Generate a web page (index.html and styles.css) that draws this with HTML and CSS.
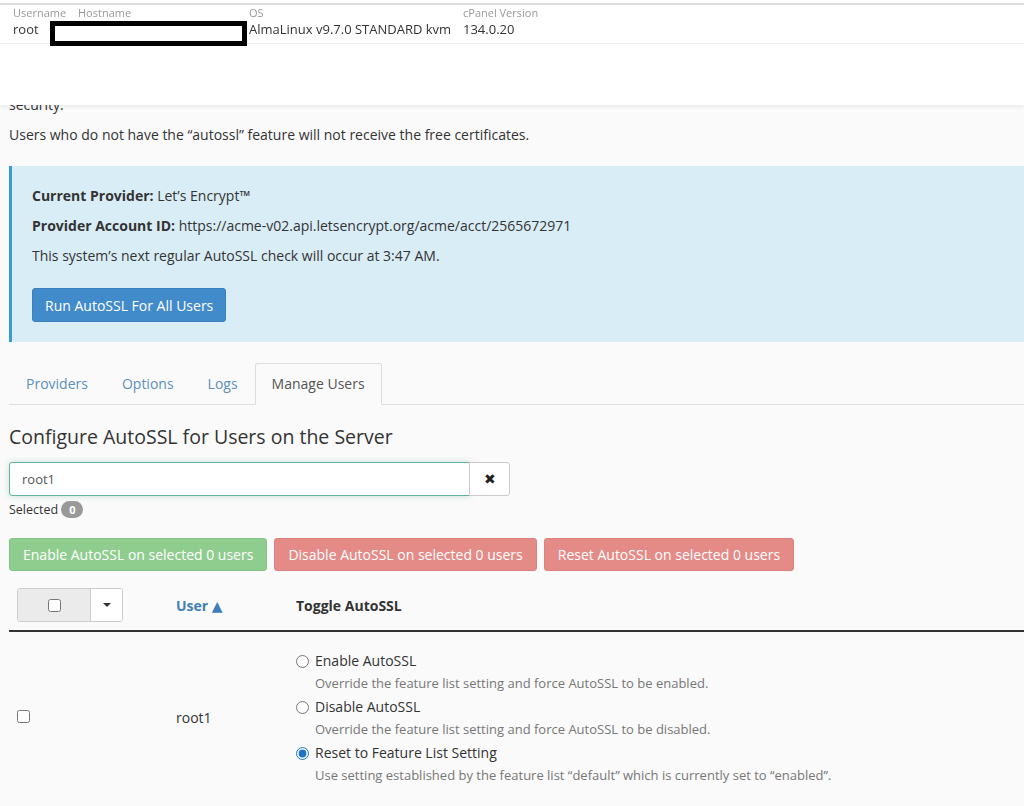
FILE: index.html
```html
<!DOCTYPE html>
<html lang="en-us">

<head>
  <meta http-equiv="Content-Type" content="text/html; charset=UTF-8">
  <title>Manage AutoSSL</title>
  <link rel="stylesheet" href="styles.css">
</head>

<body>
  <div class="header">
    <div class="topbar">
      <div class="info col-user">
        <span class="info-label">Username</span>
        <span class="info-value">root</span>
      </div>
      <div class="info col-host">
        <span class="info-label">Hostname</span>
        <span class="info-value">&nbsp;</span>
      </div>
      <div class="info col-os">
        <span class="info-label">OS</span>
        <span class="info-value">AlmaLinux v9.7.0 STANDARD kvm</span>
      </div>
      <div class="info col-ver">
        <span class="info-label">cPanel Version</span>
        <span class="info-value">134.0.20</span>
      </div>
    </div>
    <!-- hostname blacked out -->
    <div class="redact"></div>
  </div>

  <div class="main">
    <p class="intro">security.</p>
    <p class="note">Users who do not have the “autossl” feature will not receive the free certificates.</p>

    <div class="alert-info">
      <p><b>Current Provider:</b> Let’s Encrypt™</p>
      <p><b>Provider Account ID:</b> https://acme-v02.api.letsencrypt.org/acme/acct/2565672971</p>
      <p>This system’s next regular AutoSSL check will occur at 3:47 AM.</p>
      <button class="btn-primary" type="button">Run AutoSSL For All Users</button>
    </div>

    <ul class="tabs">
      <li><a href="#">Providers</a></li>
      <li><a href="#">Options</a></li>
      <li><a href="#">Logs</a></li>
      <li class="active"><a href="#">Manage Users</a></li>
    </ul>

    <h2 class="section-title">Configure AutoSSL for Users on the Server</h2>

    <div class="search-group">
      <input class="search-input" type="text" value="root1">
      <button class="search-clear" type="button">✖</button>
    </div>
    <div class="selected">Selected <span class="badge">0</span></div>

    <div class="bulk-actions">
      <button class="btn-bulk btn-enable" type="button">Enable AutoSSL on selected 0 users</button>
      <button class="btn-bulk btn-disable" type="button">Disable AutoSSL on selected 0 users</button>
      <button class="btn-bulk btn-reset" type="button">Reset AutoSSL on selected 0 users</button>
    </div>

    <table class="users">
      <thead>
        <tr>
          <th class="col-check">
            <div class="select-split">
              <span class="select-box"><input type="checkbox"></span>
              <span class="select-caret"><span class="caret"></span></span>
            </div>
          </th>
          <th class="col-name"><a href="#" class="sort">User ▲</a></th>
          <th>Toggle AutoSSL</th>
        </tr>
      </thead>
      <tbody>
        <tr>
          <td class="col-check"><input type="checkbox"></td>
          <td class="col-name">root1</td>
          <td>
            <div class="option">
              <label><input type="radio" name="root1"> Enable AutoSSL</label>
              <div class="option-help">Override the feature list setting and force AutoSSL to be enabled.</div>
            </div>
            <div class="option">
              <label><input type="radio" name="root1"> Disable AutoSSL</label>
              <div class="option-help">Override the feature list setting and force AutoSSL to be disabled.</div>
            </div>
            <div class="option">
              <label><input type="radio" name="root1" checked> Reset to Feature List Setting</label>
              <div class="option-help">Use setting established by the feature list “default” which is currently set to “enabled”.</div>
            </div>
          </td>
        </tr>
      </tbody>
    </table>
  </div>
</body>

</html>
```

FILE: styles.css
```css
body {
  font-family: "Open Sans", "DejaVu Sans", sans-serif;
  font-size: 14px;
  color: #333;
  background-color: #fafafa;
  margin: 0;
  padding: 0;
  overflow: hidden;
}

p {
  margin: 0;
  line-height: 20px;
}

.header {
  position: fixed;
  top: 0;
  left: 0;
  right: 0;
  height: 105px;
  background-color: #fff;
  box-shadow: 0 2px 4px rgba(0, 0, 0, 0.07);
  z-index: 10;
}

.topbar {
  display: flex;
  margin-top: 3px;
  padding: 1px 0 5px 13px;
  border-top: 2px solid #ddd;
  border-bottom: 1px solid #eee;
}

.info {
  display: flex;
  flex-direction: column;
}

.info-label {
  font-size: 11px;
  line-height: 14px;
  color: #999;
}

.info-value {
  font-size: 13px;
  line-height: 18px;
  color: #333;
}

.col-user {
  width: 65px;
}

.col-host {
  width: 171px;
}

.col-os {
  width: 214px;
}

.redact {
  position: absolute;
  left: 50px;
  top: 21px;
  width: 197px;
  height: 25px;
  box-sizing: border-box;
  border: 5px solid #000;
  background: #fff;
}

.main {
  padding: 95px 0 0 9px;
}

.intro {
  margin-bottom: 10px;
}

.note {
  margin-bottom: 21px;
}

.alert-info {
  background-color: #d9edf7;
  border-left: 3px solid #3a9bd0;
  padding: 20px;
}

.alert-info p {
  margin-bottom: 10px;
}

.alert-info b {
  font-weight: 700;
}

.btn-primary {
  margin-top: 12px;
  height: 34px;
  padding: 0 12px;
  font-family: inherit;
  font-size: 14px;
  color: #fff;
  background-color: #428bca;
  border: 1px solid #3b80bd;
  border-radius: 3px;
}

.tabs {
  display: flex;
  list-style: none;
  margin: 21px 0 0;
  padding: 0;
  border-bottom: 1px solid #ddd;
}

.tabs li {
  margin-bottom: -1px;
}

.tabs a {
  display: block;
  padding: 0 16px;
  line-height: 40px;
  font-size: 14px;
  color: #5b8fbe;
  text-decoration: none;
  border: 1px solid transparent;
  border-radius: 3px 3px 0 0;
}

.tabs .active a {
  color: #555;
  background-color: #fafafa;
  border-color: #ddd #ddd transparent;
}

.section-title {
  margin: 19px 0 12px;
  font-size: 19.5px;
  font-weight: 400;
  line-height: 26px;
  color: #333;
}

.search-group {
  display: flex;
  width: 510px;
}

.search-input {
  box-sizing: border-box;
  width: 461px;
  height: 34px;
  padding: 0 12px;
  font-family: inherit;
  font-size: 13px;
  color: #555;
  background: #fff;
  border: 1px solid #66b2a0;
  border-radius: 3px 0 0 3px;
  box-shadow: 0 0 6px rgba(102, 178, 160, 0.35);
  outline: none;
}

.search-clear {
  box-sizing: border-box;
  width: 41px;
  height: 34px;
  margin-left: -1px;
  font-size: 14px;
  color: #222;
  background: #fff;
  border: 1px solid #ccc;
  border-radius: 0 3px 3px 0;
}

.selected {
  margin-top: 5px;
  font-size: 12.5px;
  line-height: 18px;
}

.badge {
  display: inline-block;
  min-width: 8px;
  padding: 0 7px;
  font-size: 11px;
  font-weight: 700;
  line-height: 17px;
  text-align: center;
  color: #fff;
  background-color: #999;
  border-radius: 9px;
}

.bulk-actions {
  display: flex;
  gap: 7px;
  margin-top: 19px;
}

.btn-bulk {
  height: 33px;
  padding: 0 13px;
  font-family: inherit;
  font-size: 14px;
  color: #fff;
  border: 1px solid transparent;
  border-radius: 3px;
}

.btn-enable {
  background-color: #8fcd8f;
  border-color: #85c585;
}

.btn-disable,
.btn-reset {
  background-color: #e48b88;
  border-color: #dd817e;
}

.users {
  margin-top: 9px;
  width: 1015px;
  border-collapse: collapse;
}

.users th {
  padding: 8px;
  font-size: 14px;
  font-weight: 700;
  text-align: left;
  border-bottom: 2px solid #333;
}

.users td {
  padding: 19px 8px 16px;
  vertical-align: middle;
}

.users .col-check {
  width: 143px;
}

.users .col-name {
  width: 104px;
}

.sort {
  color: #3f7fb9;
  text-decoration: none;
}

.select-split {
  display: flex;
  width: 106px;
  height: 34px;
  border: 1px solid #ccc;
  border-radius: 3px;
  box-sizing: border-box;
  overflow: hidden;
}

.select-box {
  display: flex;
  align-items: center;
  justify-content: center;
  width: 72px;
  background-color: #ebebeb;
  border-right: 1px solid #ccc;
}

.select-caret {
  display: flex;
  align-items: center;
  justify-content: center;
  flex: 1;
  background: #fff;
}

.caret {
  width: 0;
  height: 0;
  border-left: 4px solid transparent;
  border-right: 4px solid transparent;
  border-top: 4px solid #333;
}

input[type="checkbox"],
input[type="radio"] {
  margin: 0;
  width: 13px;
  height: 13px;
  accent-color: #1f74c8;
}

.option {
  margin-bottom: 5px;
}

.option:last-child {
  margin-bottom: 0;
}

.option label {
  display: flex;
  align-items: center;
  gap: 6px;
  font-size: 14px;
  line-height: 20px;
}

.option-help {
  margin-top: 3px;
  padding-left: 19px;
  font-size: 13px;
  line-height: 18px;
  color: #777;
}
```
